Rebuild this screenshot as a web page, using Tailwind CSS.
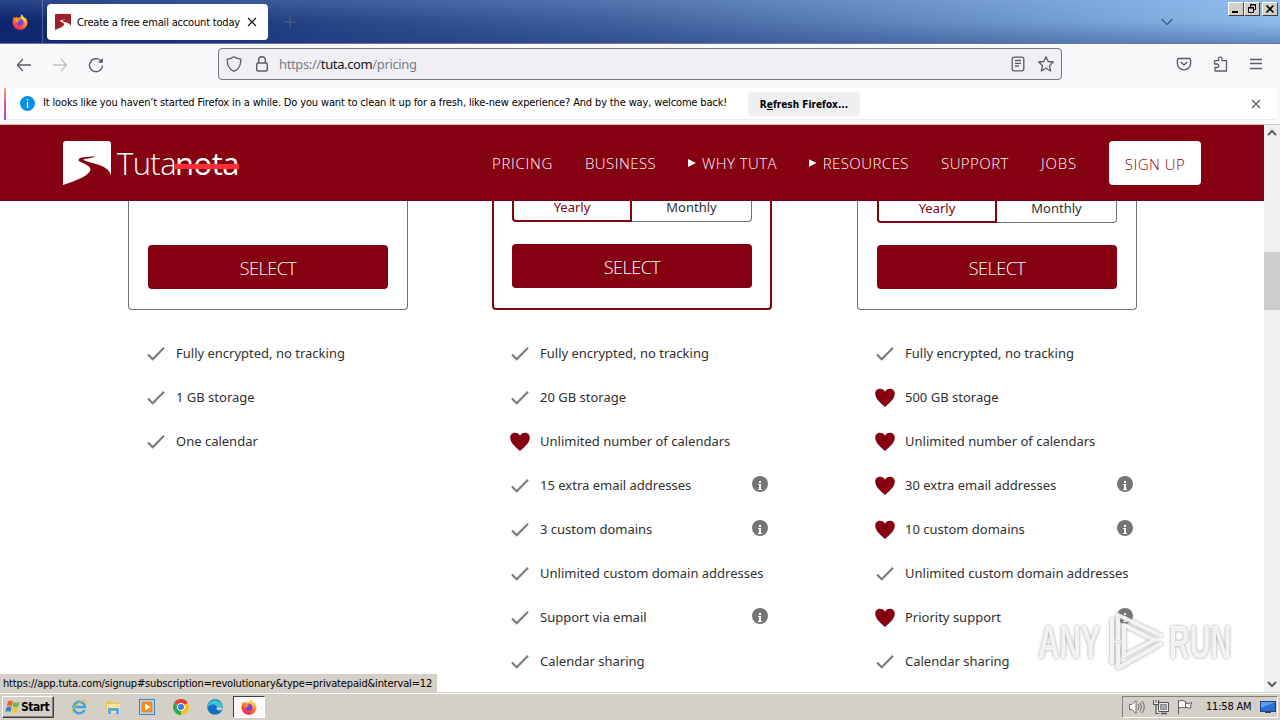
<!DOCTYPE html>
<html lang="en">
<head>
    <meta charset="UTF-8">
    <meta name="viewport" content="width=device-width, initial-scale=1.0">
    <title>Create a free email account today</title>
    <script src="https://cdn.jsdelivr.net/npm/@tailwindcss/browser@4"></script>
</head>
<body class="relative flex flex-col w-[1280px] h-[720px] overflow-hidden bg-white text-black font-['DejaVu_Sans_Condensed','DejaVu_Sans',sans-serif]">

    <!-- Shared icons -->
    <svg class="absolute w-0 h-0">
        <defs>
            <linearGradient id="fxOuter" x1="0.8" y1="0" x2="0.2" y2="1">
                <stop offset="0" stop-color="#ffe34a"/>
                <stop offset="0.45" stop-color="#ff8a1f"/>
                <stop offset="0.8" stop-color="#ff3647"/>
                <stop offset="1" stop-color="#e31587"/>
            </linearGradient>
        </defs>
        <symbol id="firefox" viewBox="0 0 16 16">
            <path d="M1.2 4.2 2.6 2.6 3 4 5 2.6 5.4 4 8.6 3.2 9.4 0.3 12 3.4 14.2 4.6 15.6 8.6A7.6 7.4 0 0 1 0.4 8.6Z" fill="url(#fxOuter)"/>
            <circle cx="8" cy="8.4" r="3.5" fill="#7a3fe0"/>
            <path d="M3.6 5.2C5.6 4.6 7.6 5.4 8.4 6.8 6.8 6.6 5.6 7.4 5.8 8.8 4 9 3 7 3.6 5.2Z" fill="#ff9a2a"/>
            <path d="M9.4 0.3 12 3.4 14 5.4 12.6 8 10.6 4.8 8.8 3.4Z" fill="#ffd43c"/>
        </symbol>
        <symbol id="tuta" viewBox="0 0 48 44">
            <path d="M3 0H45Q48 0 48 3V34.500C46.500 29 42 25.500 33 23 26 21 21 20 20.500 18.500 20.500 17.300 29 18 32.500 15 25 16.500 15.500 15.500 15.500 19 15.500 21.500 27.500 23.500 27.500 28.500 27 34 14 39.500 0 44V3Q0 0 3 0Z" fill="currentColor"/>
        </symbol>
        <symbol id="check" viewBox="0 0 20 20">
            <path d="M2 10.500 6.700 15.300 18 3.800" fill="none" stroke="#7a7a7a" stroke-width="2.100"/>
        </symbol>
        <symbol id="heart" viewBox="0 0 20 20">
            <path d="M10 19C7 16 0.200 11.500 0.200 5.800 0.200 2.600 2.500 0.800 5 0.800 7.300 0.800 9.200 2 10 3.700 10.800 2 12.700 0.800 15 0.800 17.500 0.800 19.800 2.600 19.800 5.800 19.800 11.500 13 16 10 19Z" fill="#850010"/>
        </symbol>
        <symbol id="info" viewBox="0 0 16 16">
            <circle cx="8" cy="8" r="8" fill="#757575"/>
            <path d="M7 5h2v2H7zM6 8h3v5h1v1H6v-1h1V9H6z" fill="#fff"/>
        </symbol>
    </svg>

    <!-- Title bar -->
    <div class="relative flex h-[44px] shrink-0 border-b border-[#66789c] bg-linear-to-r from-[#0a246c] via-[#43639f] to-[#8dbdec]">
        <div class="absolute inset-0 bg-linear-to-b from-[#a0c8ff]/20 via-transparent to-[#183078]/35"></div>
        <div class="relative flex w-[43px] items-center justify-center border-r border-white/25 pr-[3px]">
            <svg class="size-4"><use href="#firefox"/></svg>
        </div>
        <div class="relative mt-1 ml-1 flex h-9 w-[221px] items-center rounded bg-white pl-2">
            <svg class="size-4 text-[#a01e28]" viewBox="0 0 48 44" preserveAspectRatio="none"><use href="#tuta"/></svg>
            <span class="mt-[2px] ml-[6px] w-[167px] text-[11px] tracking-[-0.18px] whitespace-nowrap">Create a free email account today</span>
            <svg class="ml-[3px] size-[10px]" viewBox="0 0 10 10" stroke="#15141a" stroke-width="1.2"><path d="M1 1 9 9M9 1 1 9"/></svg>
        </div>
        <svg class="relative mt-4 ml-4 size-3" viewBox="0 0 12 12" stroke="#4d6478" stroke-width="1"><path d="M6 0V12M0 6H12"/></svg>
        <svg class="relative mt-[18px] ml-auto mr-[55px] h-[8px] w-[12px]" viewBox="0 0 12 8" fill="none" stroke="#45618f" stroke-width="1.500"><path d="M0.500 1 6 6.500 11.500 1"/></svg>
        <div class="relative mt-[2px] mr-[2px] flex">
            <div class="flex h-[14px] w-4 border border-t-white border-l-white border-r-[#404040] border-b-[#404040] bg-[#d4d0c8]">
                <svg class="h-3 w-[14px]" viewBox="0 0 14 12"><path d="M3 8H9V10H3Z"/></svg>
            </div>
            <div class="flex h-[14px] w-4 border border-t-white border-l-white border-r-[#404040] border-b-[#404040] bg-[#d4d0c8]">
                <svg class="h-3 w-[14px]" viewBox="0 0 14 12" fill="none" stroke="#000"><path d="M5.500 4V1.500H10.500V6.500H9M5 2H11M3.500 4.500V9.500H8.500V4.500ZM3 5H9"/></svg>
            </div>
            <div class="ml-[2px] flex h-[14px] w-4 border border-t-white border-l-white border-r-[#404040] border-b-[#404040] bg-[#d4d0c8]">
                <svg class="h-3 w-[14px]" viewBox="0 0 14 12" stroke="#000" stroke-width="1.600"><path d="M3.500 2.500 10.500 9.500M10.500 2.500 3.500 9.500"/></svg>
            </div>
        </div>
    </div>

    <!-- Toolbar -->
    <div class="flex h-[44px] shrink-0 items-start bg-[#f9f9fb] text-[#5b5b66]">
        <svg class="mt-[13px] ml-4 size-4" viewBox="0 0 16 16" fill="none" stroke="currentColor" stroke-width="1.300"><path d="M15 8H1.500M7 2 1.500 8 7 14"/></svg>
        <svg class="mt-[13px] ml-5 size-4 text-[#c0c0c6]" viewBox="0 0 16 16" fill="none" stroke="currentColor" stroke-width="1.300"><path d="M1 8H14.500M9 2 14.500 8 9 14"/></svg>
        <svg class="mt-[13px] ml-5 size-4" viewBox="0 0 16 16" fill="none" stroke="currentColor" stroke-width="1.400"><path d="M14.500 8.500A6.500 6.500 0 1 1 12.300 3.300L14 5"/><path d="M14.800 1V5.800H10Z" fill="currentColor" stroke="none"/></svg>
        <div class="mt-1 ml-[114px] flex h-8 w-[844px] items-center rounded border border-[#73737b] bg-[#f0f0f4] px-[7px]">
            <svg class="size-4" viewBox="0 0 16 16" fill="none" stroke="currentColor" stroke-width="1.300"><path d="M8 0.800C10 2.300 12.500 3 14.800 3.200 15 9 12.500 13.500 8 15.300 3.500 13.500 1 9 1.200 3.200 3.500 3 6 2.300 8 0.800Z"/></svg>
            <svg class="ml-3 size-4" viewBox="0 0 16 16" fill="none" stroke="currentColor" stroke-width="1.400"><rect x="2.700" y="7" width="10.600" height="8" rx="1.300"/><path d="M4.700 7V4A3.300 3.300 0 0 1 11.300 4V7"/></svg>
            <span class="mt-[2px] ml-[9px] font-['Noto_Sans',sans-serif] text-[13px] tracking-[-0.37px] whitespace-nowrap text-[#7b7b83]">https://<span class="text-[#15141a]">tuta.com</span>/pricing</span>
            <svg class="ml-auto size-4" viewBox="0 0 16 16" fill="none" stroke="currentColor" stroke-width="1.300"><rect x="2.200" y="1.200" width="11.600" height="13.600" rx="2"/><path d="M5 4.500H11M5 7.300H11M5 10H9"/></svg>
            <svg class="ml-3 size-4" viewBox="0 0 16 16" fill="none" stroke="currentColor" stroke-width="1.300" stroke-linejoin="round"><path d="M8 0.800 10.200 5.500 15.300 6 11.500 9.600 12.600 15 8 12.300 3.400 15 4.500 9.600 0.700 6 5.800 5.500Z"/></svg>
        </div>
        <svg class="mt-[12px] ml-[114px] size-4" viewBox="0 0 16 16" fill="none" stroke="currentColor" stroke-width="1.400"><path d="M2.800 2.500H13.200Q14.600 2.500 14.600 4V7.500A6.600 6.400 0 0 1 1.400 7.500V4Q1.400 2.500 2.800 2.500ZM4.800 6 8 9 11.200 6"/></svg>
        <svg class="mt-[12px] ml-5 size-4" viewBox="0 0 16 16" fill="none" stroke="currentColor" stroke-width="1.300" stroke-linejoin="round"><path d="M3 15V11.500H5A1.700 1.700 0 0 0 5 8H2.500V4.600H6.500V2.800A1.700 1.700 0 0 1 10 2.800V4.600H14.500V15Z"/></svg>
        <svg class="mt-[12px] ml-5 size-4" viewBox="0 0 16 16" stroke="currentColor" stroke-width="1.300"><path d="M2 3.500H14M2 7.500H14M2 12.500H14"/></svg>
    </div>

    <!-- Notification bar -->
    <div class="h-[36px] shrink-0 bg-[#f9f9fb] pr-1 pl-1">
        <div class="flex h-8 items-center border-b border-[#e4eeee] bg-white">
            <div class="h-8 w-[2px] bg-linear-to-b from-[#f5a070] via-[#e0508a] to-[#a050d8]"></div>
            <svg class="ml-[14px] size-[15px]" viewBox="0 0 15 15"><circle cx="7.500" cy="7.500" r="7.500" fill="#0b8ee8"/><path d="M7.500 3V4.500M7.500 6V12" stroke="#fff" stroke-width="1.300"/></svg>
            <span class="ml-2 w-[705px] text-[11px] tracking-[-0.148px] whitespace-nowrap">It looks like you haven’t started Firefox in a while. Do you want to clean it up for a fresh, like-new experience? And by the way, welcome back!</span>
            <button class="h-6 w-28 rounded bg-[#efeff1] pt-px text-[10px] font-bold whitespace-nowrap">R<u>e</u>fresh Firefox...</button>
            <svg class="ml-auto mr-[15px] size-[10px]" viewBox="0 0 10 10" stroke="#5b5b66" stroke-width="1.200"><path d="M1 1 9 9M9 1 1 9"/></svg>
        </div>
    </div>
    <div class="flex h-px shrink-0"><div class="w-[1264px] bg-[#f5a4ae]"></div><div class="flex-1 bg-[#c8c8cc]"></div></div>

    <!-- Page -->
    <div class="flex h-[567px] shrink-0 font-['Noto_Sans','Open_Sans',sans-serif]">
        <div class="relative flex-1">
            <header class="flex h-[76px] items-start border-t border-b border-t-[#6e0e1e] border-b-[#6e0418] bg-[#850010] pl-[63px] text-white">
                <svg class="mt-[15px] h-[44px] w-12"><use href="#tuta"/></svg>
                <div class="mt-[17px] ml-[6px] flex h-10 items-center font-['Open_Sans',sans-serif] text-[31px] leading-10">
                    <span class="w-[58px] font-light tracking-[-0.6px]">Tuta</span>
                    <span class="relative w-[64px] font-medium tracking-[-0.5px]">nota<span class="absolute top-[21px] left-0 h-[5px] w-full bg-[#ff2d35]"></span></span>
                </div>
                <nav class="mt-[25px] ml-auto flex gap-8 font-['Open_Sans',sans-serif] text-[15px] leading-6 font-light tracking-[0.45px]">
                    <a class="w-[61px] tracking-[0.7px]">PRICING</a>
                    <a class="w-[71px]">BUSINESS</a>
                    <a class="flex w-[89px] items-center gap-[6px] whitespace-nowrap"><svg class="h-2 w-2" viewBox="0 0 8 8" fill="#fff"><path d="M0 0 8 4 0 8Z"/></svg>WHY TUTA</a>
                    <a class="flex w-[100px] items-center gap-[6px]"><svg class="h-2 w-2" viewBox="0 0 8 8" fill="#fff"><path d="M0 0 8 4 0 8Z"/></svg>RESOURCES</a>
                    <a class="w-[68px]">SUPPORT</a>
                    <a class="w-[36px] tracking-[0.8px]">JOBS</a>
                </nav>
                <a class="mt-[15px] ml-8 mr-[63px] flex h-[44px] w-[92px] items-center justify-center rounded bg-white pt-[2px] font-['Open_Sans',sans-serif] text-[15px] font-light tracking-[0.5px] text-[#850010]">SIGN UP</a>
            </header>

            <div class="flex h-[109px] pl-32">
                <div class="w-[280px] rounded-b border border-t-0 border-[#707070] px-[19px] pt-[44px]">
                    <button class="h-[44px] w-[240px] rounded bg-[#850010] pt-px font-['Open_Sans',sans-serif] text-[18px] leading-6 font-light tracking-[-0.5px] text-white">SELECT</button>
                </div>
                <div class="ml-[84px] w-[280px] rounded-b border-2 border-t-0 border-[#850010] px-[18px]">
                    <div class="flex h-[21px] text-center text-[13px] leading-[12px]">
                        <div class="w-[120px] rounded-bl-sm border-2 border-t-0 border-[#850010] text-[#850010]">Yearly</div>
                        <div class="w-[120px] rounded-br-sm border border-t-0 border-l-0 border-[#707070] text-[#303030]">Monthly</div>
                    </div>
                    <button class="mt-[22px] h-[44px] w-[240px] rounded bg-[#850010] pt-px font-['Open_Sans',sans-serif] text-[18px] leading-6 font-light tracking-[-0.5px] text-white">SELECT</button>
                </div>
                <div class="ml-[85px] w-[280px] rounded-b border border-t-0 border-[#707070] px-[19px]">
                    <div class="flex h-[22px] text-center text-[13px] leading-[14px]">
                        <div class="w-[120px] rounded-bl-sm border-2 border-t-0 border-[#850010] text-[#850010]">Yearly</div>
                        <div class="w-[120px] rounded-br-sm border border-t-0 border-l-0 border-[#707070] text-[#303030]">Monthly</div>
                    </div>
                    <button class="mt-[22px] h-[44px] w-[240px] rounded bg-[#850010] pt-px font-['Open_Sans',sans-serif] text-[18px] leading-6 font-light tracking-[-0.5px] text-white">SELECT</button>
                </div>
            </div>

            <div class="flex h-[382px] overflow-hidden pt-[22px] pl-[146px] text-[13px] text-[#303030]">
                <ul id="free" class="w-[364px] shrink-0"></ul>
                <ul id="revolutionary" class="w-[365px] shrink-0"></ul>
                <ul id="legend" class="w-[300px] shrink-0"></ul>
            </div>

            <!-- Link target -->
            <div class="absolute bottom-0 left-0 h-[18px] w-[437px] bg-[#d4d0c8] pl-[3px] font-['DejaVu_Sans_Condensed','DejaVu_Sans',sans-serif] text-[11px] leading-[20px] tracking-[-0.15px] whitespace-nowrap">https://app.tuta.com/signup#subscription=revolutionary&amp;type=privatepaid&amp;interval=12</div>
        </div>
        <!-- Scrollbar -->
        <div class="flex w-4 flex-col items-center bg-[#f0f0f0]">
            <svg class="mt-1 h-[7px] w-[10px]" viewBox="0 0 10 7" fill="none" stroke="#606060" stroke-width="2"><path d="M1 6 5 2 9 6"/></svg>
            <div class="mt-[116px] h-[58px] w-full bg-[#cdcdcd]"></div>
            <svg class="mt-auto mb-1 h-[7px] w-[10px]" viewBox="0 0 10 7" fill="none" stroke="#606060" stroke-width="2"><path d="M1 1 5 5 9 1"/></svg>
        </div>
    </div>

    <!-- Taskbar -->
    <div class="flex h-7 shrink-0 items-start border-t border-[#d4d0c8] bg-[#d4d0c8] text-[11px] shadow-[inset_0_1px_0_#fff]">
        <button class="mt-[3px] ml-[2px] flex h-[22px] w-[52px] items-center border border-t-white border-l-white border-r-[#404040] border-b-[#404040] pl-[2px] text-[12px] font-bold shadow-[inset_-1px_-1px_0_#808080]">
            <svg class="size-4 shrink-0" viewBox="0 0 16 16"><path d="M3 2.500Q5.500 1 7.800 2.600L6.800 7.200Q4.500 6 1.800 7.300Z" fill="#e8602c"/><path d="M8.600 3Q11 4.400 14.500 2.800L13.300 7.400Q10.500 9 7.600 7.500Z" fill="#72b83c"/><path d="M1.600 8.200Q4.200 7 6.500 8.200L5.500 12.800Q3 11.500 0.500 12.800Z" fill="#3a7bd5"/><path d="M7.400 8.500Q10 9.900 13 8.400L11.800 13Q9 14.500 6.300 13.200Z" fill="#f6c42c"/></svg>
            <span class="tracking-[-0.5px]">Start</span>
        </button>
        <svg class="mt-[6px] ml-[17px] size-4" viewBox="0 0 16 16" fill="none"><path d="M13.500 11A5.800 5.800 0 1 1 14 8H3" stroke="#3ba4e0" stroke-width="2.400"/><path d="M1.500 15C-1 12 6 3 13 1.500 16 1 15.500 3.500 14.500 5" stroke="#e6b83c" stroke-width="1.200"/></svg>
        <svg class="mt-[6px] ml-[18px] size-4" viewBox="0 0 16 16"><path d="M1 2H6L7 3.500H14V13H1Z" fill="#e8c55c"/><path d="M2 5H15V14H2Z" fill="#f8e49a"/><path d="M3 9H14V15H11V12H6V15H3Z" fill="#5fa8d8"/></svg>
        <svg class="mt-[6px] ml-[18px] size-4" viewBox="0 0 16 16"><rect x="0.500" y="0.500" width="15" height="15" fill="#b9d6ee" stroke="#3f82bd"/><rect x="2.500" y="2.500" width="11" height="11" rx="2" fill="#f58a1e"/><path d="M6 4.500 11.500 8 6 11.500Z" fill="#fff"/></svg>
        <svg class="mt-[6px] ml-[18px] size-4" viewBox="0 0 16 16"><path d="M8 8 1.070 4A8 8 0 0 1 14.930 4Z" fill="#e33b2e"/><path d="M8 8 14.930 4A8 8 0 0 1 8 16Z" fill="#fbc116"/><path d="M8 8V16A8 8 0 0 1 1.070 4Z" fill="#2da94f"/><circle cx="8" cy="8" r="3.900" fill="#fff"/><circle cx="8" cy="8" r="3" fill="#3b78e7"/></svg>
        <svg class="mt-[6px] ml-[18px] size-4" viewBox="0 0 16 16"><circle cx="8" cy="8" r="7.800" fill="#1271c4"/><path d="M0.300 8A7.800 7.800 0 0 1 15.800 8.500C15.500 11 11 11.500 9.500 10.500 11 8 9 5.500 6 5.500 3.500 5.500 1 7 0.300 8Z" fill="#3cc7c8"/><path d="M9.800 10.200Q9.200 9.600 9.800 8.500L15.800 8.800Q15 11.500 12.500 11.500 10.500 11.300 9.800 10.200Z" fill="#d4d0c8"/></svg>
        <div class="mt-[3px] ml-[10px] flex h-[22px] w-8 items-center justify-center border border-t-[#404040] border-l-[#404040] border-r-white border-b-white bg-[#fafafa]">
            <svg class="size-4"><use href="#firefox"/></svg>
        </div>
        <div class="mt-[3px] ml-auto mr-[2px] flex h-[22px] w-[156px] items-center border border-t-[#808080] border-l-[#808080] border-r-white border-b-white pl-[6px]">
            <svg class="size-4" viewBox="0 0 16 16" fill="#fff" stroke="#606060" stroke-width="0.900"><path d="M0.500 5.500H3L7 1.500V14.500L3 10.500H0.500Z"/><path d="M9 5Q11 8 9 11M11 3.500Q14 8 11 12.500M13 2Q17.500 8 13 14" fill="none"/></svg>
            <svg class="ml-2 size-4" viewBox="0 0 16 16" fill="none" stroke="#505050"><path d="M5.500 3.500H15.500V12.500H5.500Z" fill="#eee"/><path d="M7.500 5.500H13.500V10.500H7.500Z" fill="#aaa" stroke="#888"/><path d="M8 14.500H14" stroke-width="1.500"/><path d="M0.500 1V5.500H5.500V1M3 1V3.500M3 5.500V14.500H6" stroke-width="1.200" fill="#eee"/></svg>
            <svg class="ml-2 size-4" viewBox="0 0 16 16" fill="#fff" stroke="#606060"><path d="M1.500 15V1.500M1.500 2Q5 0.500 8.500 2.500V9Q5 7.500 1.500 9M8.500 4Q11 5.500 15 3.500L13.500 6.500 14 9Q11 9.500 8.500 8"/></svg>
            <span class="ml-[13px] w-[48px] whitespace-nowrap tracking-[-0.2px]">11:58 AM</span>
            <svg class="ml-[6px] h-3 w-4" viewBox="0 0 16 12"><rect x="0.500" y="0.500" width="15" height="10" fill="#2a6fd0" stroke="#1b3f80"/><path d="M1 1H15L1 7Z" fill="#5ca0f0"/><path d="M5 11H11V12H5Z" fill="#345"/></svg>
        </div>
    </div>

    <!-- Watermark -->
    <div class="absolute top-[610px] left-[1038px] flex h-[62px] items-center font-['Liberation_Sans',sans-serif] text-[47px] leading-none font-bold text-white/85 drop-shadow-[0_0_1.5px_#888]">
        <span class="w-[66px]"><span class="inline-block origin-left scale-x-63">ANY</span></span>
        <svg class="ml-1 h-[62px] w-[60px]" viewBox="0 0 60 62" fill="none" stroke="#fff" stroke-opacity="0.85" stroke-width="4" stroke-linejoin="round"><path d="M4 8V54M10 30V5L54 26M16 30V15L46 30 16 46V30M54 33 10 58V34"/></svg>
        <span class="ml-[1px] w-[66px]"><span class="inline-block origin-left scale-x-61">RUN</span></span>
    </div>

    <script>
        const plans = {
            free: [
                ["check", "Fully encrypted, no tracking"],
                ["check", "1 GB storage"],
                ["check", "One calendar"]
            ],
            revolutionary: [
                ["check", "Fully encrypted, no tracking"],
                ["check", "20 GB storage"],
                ["heart", "Unlimited number of calendars"],
                ["check", "15 extra email addresses", true],
                ["check", "3 custom domains", true],
                ["check", "Unlimited custom domain addresses"],
                ["check", "Support via email", true],
                ["check", "Calendar sharing"]
            ],
            legend: [
                ["check", "Fully encrypted, no tracking"],
                ["heart", "500 GB storage"],
                ["heart", "Unlimited number of calendars"],
                ["heart", "30 extra email addresses", true],
                ["heart", "10 custom domains", true],
                ["check", "Unlimited custom domain addresses"],
                ["heart", "Priority support", true],
                ["check", "Calendar sharing"]
            ]
        };

        for (const [id, rows] of Object.entries(plans)) {
            document.getElementById(id).innerHTML = rows.map(([icon, text, info]) => `
                <li class="flex h-[44px] items-center">
                    <svg class="size-5 shrink-0"><use href="#${icon}"/></svg>
                    <span class="ml-[10px] w-[212px] whitespace-nowrap">${text}</span>
                    ${info ? '<svg class="-mt-[4px] size-4 shrink-0"><use href="#info"/></svg>' : ''}
                </li>`).join("");
        }
    </script>
</body>
</html>
